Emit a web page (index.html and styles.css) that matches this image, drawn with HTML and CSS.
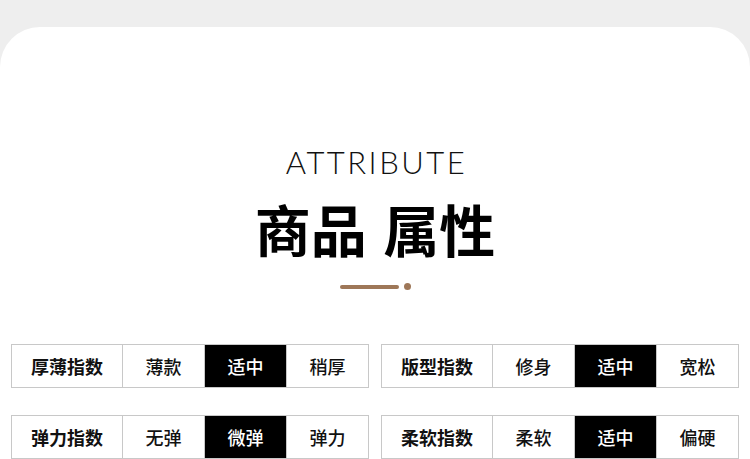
FILE: index.html
```html
<!DOCTYPE html>
<html lang="zh">
<head>
<meta charset="utf-8">
<title>商品属性</title>
<link rel="stylesheet" href="styles.css">
</head>
<body>
<main class="card">
  <header class="head">
    <p class="en">ATTRIBUTE</p>
    <h1 class="cn">商品 属性</h1>
    <div class="divider"><span class="bar"></span><span class="dot"></span></div>
  </header>
  <section class="attrs">
    <div class="attr">
      <div class="cell label">厚薄指数</div>
      <div class="cell">薄款</div>
      <div class="cell on">适中</div>
      <div class="cell">稍厚</div>
    </div>
    <div class="attr">
      <div class="cell label">版型指数</div>
      <div class="cell">修身</div>
      <div class="cell on">适中</div>
      <div class="cell">宽松</div>
    </div>
    <div class="attr">
      <div class="cell label">弹力指数</div>
      <div class="cell">无弹</div>
      <div class="cell on">微弹</div>
      <div class="cell">弹力</div>
    </div>
    <div class="attr">
      <div class="cell label">柔软指数</div>
      <div class="cell">柔软</div>
      <div class="cell on">适中</div>
      <div class="cell">偏硬</div>
    </div>
  </section>
</main>
</body>
</html>
```

FILE: styles.css
```css
html, body {
  margin: 0;
  padding: 0;
  background: #eeeeee;
  height: 100%;
  overflow: hidden;
}

.card {
  margin-top: 27px;
  background: #ffffff;
  border-radius: 40px 40px 0 0;
  height: calc(100% - 27px);
  box-sizing: border-box;
  padding-top: 120px;
}

.head {
  display: flex;
  flex-direction: column;
  align-items: center;
}

.en {
  margin: 0 0 0 3px;
  font-family: Lato, "Open Sans", sans-serif;
  font-weight: 300;
  font-size: 31px;
  line-height: 31px;
  letter-spacing: 2.5px;
  color: #111111;
}

.cn {
  margin: 22px 0 0;
  font-family: "Noto Sans CJK SC", sans-serif;
  font-weight: 700;
  font-size: 56px;
  line-height: 56px;
  word-spacing: 4px;
  color: #000000;
}

.divider {
  margin-top: 27px;
  display: flex;
  align-items: center;
  gap: 5px;
  margin-left: 0;
}

.bar {
  width: 59px;
  height: 4px;
  border-radius: 2px;
  background: #9e7758;
}

.dot {
  width: 7px;
  height: 7px;
  border-radius: 50%;
  background: #9e7758;
}

.attrs {
  margin-top: 54px;
  padding: 0 12px 0 11px;
  display: grid;
  grid-template-columns: 358px 358px;
  column-gap: 12px;
  row-gap: 27px;
}

.attr {
  display: grid;
  grid-template-columns: 110px 81px 81px 81px;
  gap: 1px;
  padding: 1px;
  background: #c8c8c8;
}

.cell {
  height: 42px;
  background: #ffffff;
  display: flex;
  align-items: center;
  justify-content: center;
  font-family: "Noto Sans CJK SC", sans-serif;
  font-size: 18px;
  font-weight: 500;
  color: #111111;
}

.cell.label {
  font-weight: 700;
}

.cell.on {
  background: #000000;
  color: #ffffff;
}
```
